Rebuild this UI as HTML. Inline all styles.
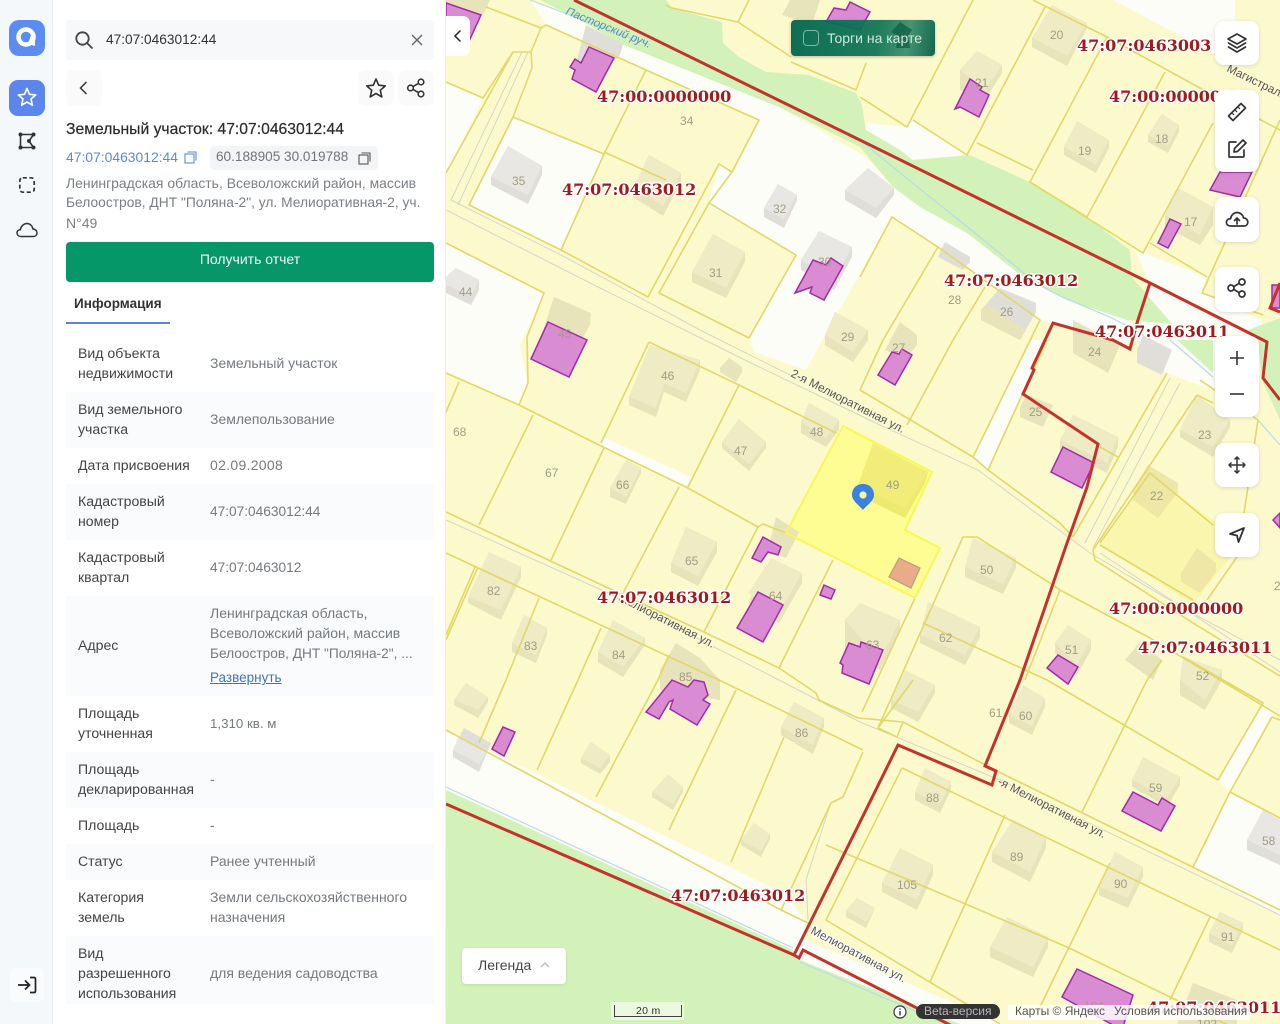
<!DOCTYPE html>
<html lang="ru"><head><meta charset="utf-8"><title>Земельный участок</title>
<style>
*{box-sizing:border-box}
html,body{margin:0;padding:0;width:1280px;height:1024px;overflow:hidden;background:#fff;font-family:"Liberation Sans","Noto Sans CJK SC",sans-serif;color:#333}
.abs{position:absolute}
#side{left:0;top:0;width:53px;height:1024px;background:#f4f8fb;border-right:1px solid #eaeef1}
#panel{left:53px;top:0;width:393px;height:1024px;background:#fff;border-right:1px solid #eee}
.t{position:absolute;white-space:nowrap;font-size:14px;line-height:20px}
.row{position:absolute;left:66px;width:368px}
.alt{background:#fafbfc}
.lab{position:absolute;left:78px;color:#444;font-size:14.1px;line-height:20px;white-space:nowrap;margin-top:-1px}
.val{position:absolute;left:210px;color:#757a7e;font-size:14px;line-height:20px;white-space:nowrap;margin-top:-1px}
.val.s{margin-top:0}
#map{position:absolute;left:446px;top:0;width:834px;height:1024px;overflow:hidden}
.ic{position:absolute;display:block}
.fb{position:absolute;left:1215px;width:44px;background:#fff;border-radius:9px;box-shadow:0 1px 4px rgba(0,0,0,.14)}
.ml{font-family:"DejaVu Serif",serif;font-weight:bold;font-size:16px;fill:#a11a1c;stroke:#fff;stroke-width:3px;paint-order:stroke;stroke-linejoin:round}
.n{font-family:"Liberation Sans",sans-serif;font-size:12px;fill:#a19d84}
.st{font-family:"Liberation Sans",sans-serif;font-size:11.8px;fill:#55554f;stroke:#fdf9d4;stroke-width:2px;paint-order:stroke}
.by{fill:#e7e3ba}.ty{fill:#efebc5}.bw{fill:#dfded8}.tw{fill:#e8e7e3}
.pu{fill:#da8cd2;stroke:#a32aa6;stroke-width:1.5}
.ln{fill:none;stroke:#e2d768;stroke-width:1.6;stroke-linejoin:round}
.gl{fill:none;stroke:#d6d5c4;stroke-width:1}
.rd{fill:none;stroke:#c4332b;stroke-width:3;stroke-linejoin:miter}
</style></head><body>

<div id="map">
<svg width="834" height="1024" viewBox="446 0 834 1024" xmlns="http://www.w3.org/2000/svg" style="position:absolute;left:0;top:0">
<rect x="446" y="0" width="834" height="1024" fill="#fcfacd"/>
<!-- white ground -->
<g fill="#fcfdf6">
<polygon points="530,0 580,20 619,43 779,107 866,157 893,187 920,207 967,233 1027,280 1067,300 1127,320 1150,338 1120,345 1053,323 1040,320 938,247 892,217 828,330 806,370 754,352 749,338 796,255 708,205 719,164 732,172 759,120 546,25"/>
<polygon points="513,118 604,154 561,250 469,205"/>
<polygon points="446,243 544,293 520,345 528,385 519,405 446,372"/>
<polygon points="446,82 483,98 446,175"/>
<polygon points="603,437 691,477 686,487 599,445"/>
<polygon points="1032,340 1047,340 988,470 973,457"/>
<polygon points="1135,250 1207,277 1202,293 1262,320 1262,345 1258,400 1213,390 1167,373 1137,345 1150,283"/>
<polygon points="1263,705 1272,713 1230,792 1218,780"/>
<polygon points="1230,793 1280,820 1280,915 1193,867"/>
<polygon points="446,730 783,893 808,923 806,940 1003,1024 960,1024 800,960 795,957 446,795"/>
<polygon points="1113,0 1235,0 1235,65"/>
<polygon points="860,122 907,127 913,120 967,155 913,160 866,130"/>
</g>
<!-- parcel 22 tint -->
<polygon points="1150,473 1213,520 1240,545 1193,605 1100,545" fill="#fbf6ae"/>
<!-- green -->
<g fill="#d3f2b9">
<polygon points="540,0 666,0 672,8 722,22 723,43 739,57 766,72 809,75 856,93 862,105 866,130 900,150 913,160 970,155 1030,182 1087,217 1130,250 1132,277 1172,324 1127,320 1067,300 1027,280 967,233 920,207 893,187 860,147 779,107 619,43 580,20"/>
<polygon points="1248,330 1280,318 1280,420 1262,380 1258,340"/>
<polygon points="1177,340 1213,373 1213,340"/>
<polygon points="446,790 793,950 800,960 960,1024 446,1024"/>
</g>
<!-- water -->
<g fill="none" stroke="#b9dbe8" stroke-width="1.2">
<path d="M530,0 L650,45"/><path d="M446,787 L793,948"/><path d="M800,962 L960,1030"/>
<path d="M860,140 C920,190 960,220 1020,270 1060,305 1100,305 1150,340"/>
<path d="M1170,340 L1213,377"/><path d="M1258,420 L1280,445"/>
</g>
<!-- selected parcel -->
<polygon points="843,426 932,472 905,530 940,548 915,598 786,533" fill="#fdfd93"/>
<!-- buildings -->
<g>
<polygon class="bw" points="508,146 542,166 542,175 528,204 491,185 491,177"/><polygon class="tw" points="508,146 542,166 528,195 491,177"/>
<polygon class="bw" points="456,268 479,280 479,290 471,305 446,293 446,277"/><polygon class="tw" points="456,268 479,280 471,296 446,285 446,277"/>
<polygon class="by" points="649,155 681,173 681,182 663,216 633,197 633,188"/><polygon class="ty" points="649,155 681,173 663,206 633,188"/>
<polygon class="bw" points="778,184 797,195 797,200 784,228 764,217 764,208"/><polygon class="tw" points="778,184 797,195 784,219 764,208"/>
<polygon class="by" points="713,234 745,252 745,262 726,298 692,282 692,272"/><polygon class="ty" points="713,234 745,252 726,288 692,272"/>
<polygon class="bw" points="819,231 852,247 852,257 834,290 801,270 801,260"/><polygon class="tw" points="819,231 852,247 834,280 801,260"/>
<polygon class="bw" points="586,25 623,44 620,55 595,80 577,60"/><polygon class="by" points="554,297 591,313 590,325 570,360 540,340"/>
<polygon class="by" points="835,312 868,330 868,340 853,362 825,345 825,335"/><polygon class="ty" points="835,312 868,330 853,352 825,335"/>
<polygon class="by" points="977,51 1002,65 1002,73 985,100 960,90 960,70"/><polygon class="ty" points="977,51 1002,65 985,90 960,70"/>
<polygon class="by" points="1052,5 1087,23 1087,28 1067,66 1032,47 1032,38"/><polygon class="ty" points="1052,5 1087,23 1067,56 1032,38"/>
<polygon class="by" points="1077,121 1109,140 1109,148 1096,173 1064,155 1064,147"/><polygon class="ty" points="1077,121 1109,140 1096,165 1064,147"/>
<polygon class="by" points="1162,114 1179,125 1179,132 1168,153 1148,142 1148,135"/><polygon class="ty" points="1162,114 1179,125 1168,146 1148,135"/>
<polygon class="by" points="1178,188 1213,207 1213,225 1200,245 1165,227 1165,215"/><polygon class="ty" points="1178,188 1213,207 1200,235 1165,215"/>
<polygon class="bw" points="868,168 894,188 894,195 876,218 845,200 845,190"/><polygon class="tw" points="868,168 894,188 876,208 845,190"/>
<polygon class="bw" points="945,242 970,257 970,262 963,270 938,257 940,252"/>
<polygon class="bw" points="1000,288 1036,303 1036,312 1020,340 981,320 981,310"/><polygon class="by" points="986,304 1026,330 1020,340 981,320 981,310"/>
<polygon class="by" points="900,322 917,335 917,345 905,360 885,350"/>
<polygon class="by" points="1073,320 1120,345 1108,373 1073,353"/>
<polygon class="bw" points="1137,350 1143,335 1172,350 1162,375 1137,363"/>
<polygon class="by" points="1020,407 1027,395 1053,405 1043,427 1020,417"/>
<polygon class="by" points="1073,415 1118,437 1118,447 1107,473 1060,450 1060,440"/><polygon class="ty" points="1073,415 1118,437 1107,463 1060,440"/>
<polygon class="by" points="1197,395 1230,420 1230,427 1213,457 1180,437 1180,430"/><polygon class="ty" points="1197,395 1230,420 1213,447 1180,430"/>
<polygon points="1148,465 1178,483 1178,492 1158,518 1133,500 1133,490" fill="#eee7a6"/>
<polygon points="1197,548 1216,563 1216,572 1200,593 1181,582 1181,573" fill="#eee7a6"/>
<polygon points="873,443 928,472 925,483 905,518 858,495" fill="#eeea6e"/><polygon points="873,443 928,472 905,508 858,485" fill="#f1ed78"/>
<polygon class="by" points="973,538 1016,558 1016,568 1003,594 965,577 965,567"/><polygon class="ty" points="973,538 1016,558 1003,584 965,567"/>
<polygon class="by" points="928,602 980,627 980,637 965,665 920,643 920,635"/><polygon class="ty" points="928,602 980,627 965,655 920,635"/>
<polygon class="by" points="860,603 900,620 900,630 880,670 845,650 845,620"/><polygon class="ty" points="860,603 900,620 880,660 845,620"/>
<polygon class="by" points="1068,625 1091,640 1091,650 1077,675 1055,653 1055,643"/><polygon class="ty" points="1068,625 1091,640 1077,665 1055,643"/>
<polygon class="by" points="1140,642 1162,660 1153,680 1125,660"/>
<polygon class="by" points="1183,657 1222,670 1222,680 1205,710 1180,695 1180,680"/><polygon class="ty" points="1183,657 1222,670 1205,700 1180,680"/>
<polygon class="by" points="905,670 935,685 935,693 918,722 891,708 891,700"/><polygon class="ty" points="905,670 935,685 918,712 891,700"/>
<polygon class="by" points="650,345 700,360 700,370 686,402 664,392 656,417 629,405 629,397"/><polygon class="ty" points="650,345 700,360 686,393 664,383 656,408 629,397"/>
<polygon class="by" points="729,358 742,367 742,372 736,382 720,372 720,368"/>
<polygon class="by" points="739,419 766,442 766,448 749,471 722,448 722,442"/><polygon class="ty" points="739,419 766,442 749,464 722,442"/>
<polygon class="by" points="809,403 839,420 839,430 826,447 801,433 801,422"/><polygon class="ty" points="809,403 839,420 826,438 801,422"/>
<polygon class="by" points="626,460 641,468 641,473 626,504 610,497 610,488"/><polygon class="ty" points="626,460 641,468 626,497 610,488"/>
<polygon class="by" points="686,527 717,542 717,552 698,586 671,572 671,563"/><polygon class="ty" points="686,527 717,542 698,576 671,563"/>
<polygon class="by" points="776,517 799,532 786,558 768,550"/>
<polygon class="by" points="771,558 802,573 802,583 779,623 748,603"/><polygon class="ty" points="771,558 802,573 779,613 748,593"/>
<polygon class="by" points="489,552 521,567 521,577 501,620 468,603 468,597"/><polygon class="ty" points="489,552 521,567 501,610 468,597"/>
<polygon class="by" points="524,615 547,628 547,635 536,663 512,652 512,643"/><polygon class="ty" points="524,615 547,628 536,655 512,643"/>
<polygon class="by" points="613,620 645,638 645,645 623,677 598,662 598,652"/><polygon class="ty" points="613,620 645,638 623,667 598,652"/>
<polygon class="by" points="676,643 700,658 720,680 720,700 660,690 660,670"/>
<polygon class="by" points="466,683 488,697 488,702 478,718 454,705 454,700"/><polygon class="ty" points="466,683 488,697 478,710 454,700"/>
<polygon class="bw" points="464,728 491,743 479,772 453,757 453,750"/><polygon class="tw" points="458,738 487,752 479,764 453,750"/>
<polygon class="by" points="591,742 610,755 610,762 600,774 581,763 581,758"/><polygon class="ty" points="591,742 610,755 600,768 581,758"/>
<polygon class="by" points="668,774 683,787 683,792 673,810 652,797 652,792"/><polygon class="ty" points="668,774 683,787 673,804 652,792"/>
<polygon class="by" points="794,702 824,718 824,727 813,754 781,735 781,727"/><polygon class="ty" points="794,702 824,718 813,745 781,727"/>
<polygon class="by" points="754,823 770,834 770,839 761,857 741,845 741,840"/><polygon class="ty" points="754,823 770,834 761,851 741,840"/>
<polygon class="by" points="857,898 875,908 866,928 846,917 846,910"/><polygon class="ty" points="857,898 875,908 866,922 846,910"/>
<polygon class="by" points="1023,685 1045,698 1045,707 1032,735 1009,723 1009,715"/><polygon class="ty" points="1023,685 1045,698 1032,726 1009,715"/>
<polygon class="by" points="925,768 951,782 951,790 940,813 915,800 915,792"/><polygon class="ty" points="925,768 951,782 940,804 915,792"/>
<polygon class="by" points="1013,820 1046,838 1046,848 1030,882 992,862 992,852"/><polygon class="ty" points="1013,820 1046,838 1030,872 992,852"/>
<polygon class="by" points="900,848 933,865 933,875 917,910 882,892 882,883"/><polygon class="ty" points="900,848 933,865 917,900 882,883"/>
<polygon class="by" points="1115,852 1143,867 1143,877 1128,908 1099,895 1099,887"/><polygon class="ty" points="1115,852 1143,867 1128,898 1099,887"/>
<polygon class="by" points="1007,917 1048,937 1048,947 1033,977 990,957 990,947"/><polygon class="ty" points="1007,917 1048,937 1033,967 990,947"/>
<polygon class="by" points="1220,912 1243,923 1243,930 1232,953 1209,942 1209,933"/><polygon class="ty" points="1220,912 1243,923 1232,945 1209,933"/>
<polygon class="by" points="1143,757 1180,777 1180,785 1167,807 1132,787 1132,780"/><polygon class="ty" points="1143,757 1180,777 1167,798 1132,780"/>
<polygon class="bw" points="1263,810 1280,820 1280,865 1247,850 1247,840"/><polygon class="tw" points="1263,810 1280,820 1280,855 1247,840"/>
<polygon class="by" points="1193,983 1237,1000 1237,1024 1177,1024"/>
<polygon class="by" points="782,15 790,0 820,0 812,25"/><polygon class="by" points="446,0 490,0 483,15 446,10"/>
</g>
<!-- thin grey road lines -->
<g class="gl">
<path d="M522,52 L451,200 L561,255 L700,330 L790,375"/><path d="M528,52 L458,205"/>
<path d="M446,210 L600,288 L749,362 L880,425 L978,470 L1090,553 L1190,612 L1280,660"/>
<path d="M446,520 L606,592 L779,680 L860,722 L1000,780 L1280,915"/>
<path d="M1170,378 L1085,543"/><path d="M1180,383 L1093,548"/>
<path d="M830,805 L806,880 L808,920"/><path d="M1100,553 L1280,672"/>
</g>
<!-- parcel lines -->
<g class="ln">
<path d="M486,7 L541,28 L531,52 L513,52 L446,173"/><path d="M446,82 L483,98 L513,52"/>
<path d="M541,28 L546,25 L646,70 L759,120 L732,172 L719,164 L648,297 L561,250 L469,205 L513,117 L604,154 L561,250"/>
<path d="M531,52 L532,68 L513,117"/><path d="M646,70 L604,154"/><path d="M604,152 L666,180"/>
<path d="M732,172 L709,203 L796,255 L749,338 L659,293 L709,203"/>
<path d="M446,243 L544,293 L527,337 L528,383 L519,405"/>
<path d="M749,0 L738,22 L791,57"/><path d="M666,5 L672,8 L738,22"/><path d="M791,62 L856,90 L866,63"/>
<path d="M860,97 L907,127 L973,0"/><path d="M913,120 L967,155 L1045,7"/><path d="M977,143 L1033,170"/>
<path d="M1033,0 L1107,37 L1030,182 L1087,217 L1165,72"/><path d="M1107,37 L1200,88 L1280,130"/>
<path d="M1030,182 L1143,253 L1213,123"/><path d="M1150,243 L1207,277"/><path d="M1226,240 L1202,293 L1263,315"/><path d="M1226,240 L1280,120"/>
<path d="M860,277 L892,217 L938,247 L1040,320 L973,457"/>
<path d="M938,247 L883,340 L860,390"/><path d="M985,287 L953,340 L907,425"/>
<path d="M446,373 L519,405 L599,445 L686,487 L758,527 L763,524 L786,533"/>
<path d="M758,527 L704,632"/><path d="M459,382 L446,412"/><path d="M533,415 L479,525"/><path d="M604,448 L551,560"/><path d="M679,487 L621,597"/>
<path d="M649,342 L601,443"/><path d="M649,342 L739,385 L836,433"/><path d="M739,385 L688,487"/>
<path d="M860,390 L973,457 L988,470 L1060,523 L1073,537 L1167,373"/><path d="M988,470 L1047,340"/><path d="M1100,447 L1118,457"/>
<path d="M1197,395 L1213,403"/><path d="M1197,395 L1093,550 L1095,560 L1193,623 L1280,676"/>
<path d="M1100,543 L1150,473 L1213,525"/><path d="M1100,545 L1193,600"/><path d="M1237,557 L1207,600"/><path d="M1258,420 L1240,540 L1237,557"/><path d="M1200,380 L1258,420"/>
<path d="M963,537 L977,537 L1053,585 L1060,590 L1150,638 L1280,716"/><path d="M963,537 L878,728"/>
<path d="M915,598 L862,712"/><path d="M923,623 L1047,680 L1218,780"/><path d="M1060,590 L1025,680"/>
<path d="M1183,657 L1223,680 L1263,703"/><path d="M1162,660 L1147,680"/>
<path d="M446,512 L606,587 L704,632 L779,668 L816,693 L819,700 L858,718 L903,722 L995,770 L1280,910"/>
<path d="M446,553 L719,680 L863,750"/><path d="M478,567 L446,640"/><path d="M475,567 L446,635"/>
<path d="M539,598 L506,680 L479,743"/><path d="M601,628 L578,680 L537,770"/><path d="M669,655 L658,680 L596,797"/>
<path d="M833,560 L779,668"/><path d="M736,690 L669,830"/><path d="M784,737 L731,862"/>
<path d="M446,730 L781,910 L808,923"/><path d="M781,910 L831,803 L843,797 L863,752"/>
<path d="M903,722 L897,737 L878,728 L913,680"/><path d="M902,768 L826,920 L1000,1024"/>
<path d="M902,768 L1280,950"/><path d="M826,845 L1067,947 L1170,997 L1280,1050"/>
<path d="M1005,815 L930,982"/><path d="M1110,863 L1037,1013"/><path d="M1210,917 L1170,1000"/>
<path d="M1147,680 L1082,812"/><path d="M1223,680 L1263,703 L1218,780"/>
<path d="M1230,792 L1193,867"/><path d="M1272,717 L1230,792"/><path d="M1230,792 L1280,818"/><path d="M1272,717 L1280,720"/>
</g>
<polygon points="843,426 932,472 905,530 940,548 915,598 786,533" fill="none" stroke="#f7f757" stroke-width="2"/>
<!-- pale structure -->
<polygon points="899,558 920,568 911,588 889,577" fill="#e8ad88" stroke="#bd9a7c" stroke-width="1.2"/>
<!-- purple buildings -->
<g class="pu">
<polygon points="446,3 481,15 465,50 446,42"/>
<polygon points="589,47 614,58 596,92 572,79 575,70 570,67 575,59 581,63"/>
<polygon points="813,260 826,265 831,258 843,266 824,300 810,293 812,287 795,293"/>
<polygon points="548,322 587,340 569,377 531,359"/>
<polygon points="970,79 982,87 980,90 989,95 979,117 960,107 955,109"/>
<polygon points="1220,172 1252,172 1240,197 1210,190"/>
<polygon points="1170,219 1181,224 1168,248 1158,243"/>
<polygon points="892,352 899,354 902,349 912,355 895,385 878,375"/>
<polygon points="1063,447 1094,463 1082,488 1051,472"/>
<polygon points="1058,655 1078,667 1068,684 1047,668"/>
<polygon points="763,537 781,547 778,555 768,552 761,562 752,558"/>
<polygon points="824,585 835,590 831,599 820,595"/>
<polygon points="758,592 783,605 763,642 737,628"/>
<polygon points="849,643 860,647 861,642 883,650 869,684 842,673 843,665 840,663"/>
<polygon points="672,680 688,687 694,680 704,682 708,695 703,700 710,704 697,725 670,709 673,700 669,702 659,719 646,712"/>
<polygon points="503,727 515,732 504,756 492,749"/>
<polygon points="1133,792 1158,805 1162,798 1175,806 1161,831 1153,827 1122,811"/>
<polygon points="1077,969 1133,995 1122,1030 1062,997"/>
<polygon points="1280,513 1273,520 1280,528"/>
<polygon points="826,22 834,8 846,10 850,2 870,12 860,30"/>
<polygon points="1272,285 1280,285 1280,308 1272,308"/>
</g>
<!-- red quarter borders -->
<g class="rd">
<path d="M574,0 L866,143 L1150,283 L1267,342 L1263,378 L1280,400"/>
<path d="M1150,283 L1137,323 L1130,349 L1113,340 L1053,323 L1032,368 L1034,370 L1023,394 L1098,444 L1087,487 L1067,543 L1020,680 L985,766 L996,771 L992,785 L898,745 L860,822 L794,955"/>
<path d="M446,804 L794,955 L799,958 L803,950 L960,1030"/>
<path d="M1280,283 L1270,308 L1280,312"/>
</g>
<!-- house numbers -->
<g class="n">
<text x="680" y="125">34</text><text x="512" y="185">35</text><text x="773" y="213">32</text><text x="709" y="277">31</text><text x="818" y="266">30</text><text x="459" y="296">44</text>
<text x="1050" y="39">20</text><text x="1078" y="155">19</text><text x="1155" y="143">18</text><text x="1184" y="226">17</text><text x="975" y="87">21</text>
<text x="948" y="304">28</text><text x="1000" y="316">26</text><text x="841" y="341">29</text><text x="892" y="352">27</text><text x="1088" y="356">24</text><text x="1029" y="416">25</text><text x="1198" y="439">23</text><text x="1150" y="500">22</text>
<text x="558" y="338">45</text><text x="661" y="380">46</text><text x="734" y="455">47</text><text x="810" y="436">48</text><text x="886" y="489">49</text><text x="980" y="574">50</text><text x="939" y="642">62</text><text x="866" y="649">63</text><text x="1065" y="654">51</text><text x="1196" y="680">52</text>
<text x="453" y="436">68</text><text x="545" y="477">67</text><text x="616" y="489">66</text><text x="685" y="565">65</text><text x="769" y="600">64</text><text x="487" y="595">82</text><text x="524" y="650">83</text><text x="612" y="659">84</text><text x="679" y="681">85</text><text x="795" y="737">86</text>
<text x="989" y="717">61</text><text x="1019" y="720">60</text><text x="1149" y="792">59</text><text x="1262" y="845">58</text><text x="926" y="802">88</text><text x="1010" y="861">89</text><text x="897" y="889">105</text><text x="1114" y="888">90</text><text x="1221" y="941">91</text><text x="1084" y="1010">104</text><text x="1197" y="1028">102</text><text x="1274" y="590">2</text>
</g>
<!-- streets -->
<text class="st" transform="translate(790,376) rotate(27)">2-я Мелиоративная ул.</text>
<text class="st" transform="translate(618,600) rotate(27)">Мелиоративная ул.</text>
<text class="st" transform="translate(997,784) rotate(27)">-я Мелиоративная ул.</text>
<text class="st" transform="translate(810,933) rotate(28)" style="stroke:#fff">Мелиоративная ул.</text>
<text transform="translate(565,14) rotate(22)" style="font:italic 11.5px 'Liberation Sans',sans-serif;fill:#5b8bb8">Пасторский руч.</text>
<text class="st" transform="translate(1226,71) rotate(26)">Магистральная</text>
<!-- cadastral labels -->
<g class="ml">
<text x="1077" y="51">47:07:0463003</text>
<text x="597" y="102">47:00:0000000</text>
<text x="1109" y="102">47:00:0000000</text>
<text x="562" y="195">47:07:0463012</text>
<text x="944" y="286">47:07:0463012</text>
<text x="1095" y="337">47:07:0463011</text>
<text x="597" y="603">47:07:0463012</text>
<text x="1109" y="614">47:00:0000000</text>
<text x="1138" y="653">47:07:0463011</text>
<text x="671" y="901">47:07:0463012</text>
<text x="1147" y="1013">47:07:0463011</text>
</g>
<!-- selected pin -->
<path d="M863,484 C856,484 852,489 852,495 C852,501 859,505 863,510 C867,505 874,501 874,495 C874,489 870,484 863,484 Z" fill="#3b82e0"/>
<circle cx="863" cy="495" r="3.6" fill="#fdfd93"/>
</svg>
</div>

<!-- map overlay controls -->
<div class="abs" style="left:446px;top:16px;width:24px;height:40px;background:#fff;border-radius:0 7px 7px 0"></div>
<svg class="ic" style="left:451px;top:29px" width="14" height="14" viewBox="0 0 14 14"><path d="M9.5,1.5 L4,7 L9.5,12.5" fill="none" stroke="#222" stroke-width="1.5"/></svg>

<div class="abs" style="left:791px;top:20px;width:144px;height:36px;border-radius:4px;background:linear-gradient(100deg,rgba(6,105,80,.97),rgba(14,115,85,.93) 60%,rgba(30,125,95,.82) 80%,rgba(6,95,70,.95));box-shadow:0 1px 3px rgba(0,0,0,.25)"></div>
<svg class="ic" style="left:888px;top:22px" width="34" height="26" viewBox="0 0 34 26"><path d="M12,0 L24,8 L20,14 L22,26 L8,26 L10,14 L3,10 Z" fill="#0a5b43" opacity=".7"/></svg>
<div class="abs" style="left:803px;top:30px;width:16px;height:16px;border:1px solid #7fb8a4;border-radius:4px"></div>
<div class="t" style="left:827px;top:28px;color:#cfe8de">Торги на карте</div>

<div class="fb" style="top:21px;height:44px"></div>
<svg class="ic" style="left:1225px;top:31px" width="24" height="24" viewBox="0 0 24 24" fill="none" stroke="#333" stroke-width="1.7" stroke-linejoin="round" stroke-linecap="round"><path d="M12,3 L21,8 L12,13 L3,8 Z"/><path d="M3.5,12 L12,17 L20.5,12"/><path d="M3.5,16 L12,21 L20.5,16"/></svg>
<div class="fb" style="top:90px;height:82px"></div>
<svg class="ic" style="left:1225px;top:100px" width="24" height="24" viewBox="0 0 24 24" fill="none" stroke="#333" stroke-width="1.7" stroke-linejoin="round"><path d="M16,3.5 L20.5,8 L8,20.5 L3.5,16 Z"/><path d="M13,7 L15,9 M10,10 L12,12 M7,13 L9,15" stroke-width="1.2"/></svg>
<svg class="ic" style="left:1225px;top:137px" width="24" height="24" viewBox="0 0 24 24" fill="none" stroke="#333" stroke-width="1.7" stroke-linejoin="round" stroke-linecap="round"><path d="M11,5 L5,5 Q4,5 4,6 L4,20 L18,20 Q19,20 19,19 L19,13"/><path d="M18,3 L21,6 L12.5,14.5 L9,15 L9.5,11.5 Z"/></svg>
<div class="fb" style="top:197px;height:45px"></div>
<svg class="ic" style="left:1225px;top:207px" width="24" height="24" viewBox="0 0 24 24" fill="none" stroke="#333" stroke-width="1.7" stroke-linejoin="round" stroke-linecap="round"><path d="M6,19 L5.5,19 C2,19 1,16 1.5,14.5 C2,12.5 4,11.5 5.5,11.8 C6,8 9,5.5 12,5.5 C15.5,5.5 18,8 18.5,11 C21,11 23,13 22.8,15.5 C22.5,18 20.5,19 19,19 Z"/><path d="M12,17 L12,11.5 M9.5,13.5 L12,11 L14.5,13.5"/></svg>
<div class="fb" style="top:267px;height:45px"></div>
<svg class="ic" style="left:1226px;top:277px" width="22" height="22" viewBox="0 0 22 22" fill="none" stroke="#333" stroke-width="1.7"><circle cx="5" cy="11" r="3"/><circle cx="16" cy="5" r="3"/><circle cx="16" cy="17" r="3"/><path d="M7.7,9.6 L13.3,6.4 M7.7,12.4 L13.3,15.6"/></svg>
<div class="fb" style="top:336px;height:81px"></div>
<svg class="ic" style="left:1229px;top:350px" width="16" height="16" viewBox="0 0 16 16"><path d="M8,1 L8,15 M1,8 L15,8" stroke="#333" stroke-width="1.6"/></svg>
<svg class="ic" style="left:1229px;top:386px" width="16" height="16" viewBox="0 0 16 16"><path d="M1,8 L15,8" stroke="#333" stroke-width="1.6"/></svg>
<div class="fb" style="top:443px;height:44px"></div>
<svg class="ic" style="left:1228px;top:456px" width="18" height="18" viewBox="0 0 18 18" fill="none" stroke="#333" stroke-width="1.5" stroke-linejoin="round"><path d="M9,1 L9,17 M1,9 L17,9"/><path d="M6.5,3.5 L9,1 L11.5,3.5 M6.5,14.5 L9,17 L11.5,14.5 M3.5,6.5 L1,9 L3.5,11.5 M14.5,6.5 L17,9 L14.5,11.5"/></svg>
<div class="fb" style="top:513px;height:44px"></div>
<svg class="ic" style="left:1228px;top:526px" width="18" height="18" viewBox="0 0 18 18" fill="none" stroke="#333" stroke-width="1.8" stroke-linejoin="round"><path d="M16,2 L2,8 L9,9.5 L10.5,16 Z"/></svg>

<div class="abs" style="left:462px;top:948px;width:104px;height:36px;background:#fff;border-radius:4px;box-shadow:0 1px 3px rgba(0,0,0,.1)"></div>
<div class="t" style="left:478px;top:955px;color:#444">Легенда</div>
<svg class="ic" style="left:540px;top:961px" width="10" height="8" viewBox="0 0 10 8"><path d="M1,6 L5,2 L9,6" fill="none" stroke="#c4c4c4" stroke-width="1.6"/></svg>

<div class="abs" style="left:611px;top:1002px;width:73px;height:18px;background:rgba(255,255,255,.55)"></div>
<div class="abs" style="left:614px;top:1005px;width:68px;height:12px;border:1px solid #444;border-top:none"></div>
<div class="t" style="left:636px;top:1001px;font-size:10.5px;color:#333;letter-spacing:.3px">20 m</div>

<svg class="ic" style="left:892px;top:1004px" width="16" height="16" viewBox="0 0 16 16"><circle cx="8" cy="8" r="6" fill="#fff" stroke="#333" stroke-width="1.2"/><path d="M8,7 L8,11.5 M8,4.5 L8,5.8" stroke="#333" stroke-width="1.4"/></svg>
<div class="abs" style="left:916px;top:1004px;width:84px;height:15px;background:#333;border-radius:8px"></div>
<div class="t" style="left:924px;top:1001px;font-size:12px;color:#b6b6b6">Beta-версия</div>
<div class="abs" style="left:1008px;top:1005px;width:242px;height:15px;background:rgba(255,255,255,.82)"></div>
<div class="t" style="left:1015px;top:1001px;font-size:12px;color:#555">Карты © Яндекс</div>
<div class="t" style="left:1114px;top:1001px;font-size:12px;color:#555">Условия использования</div>

<!-- sidebar -->
<div id="side" class="abs"></div>
<div class="abs" style="left:9px;top:20px;width:36px;height:36px;background:#5a8cf2;border-radius:10px"></div>
<svg class="ic" style="left:9px;top:20px" width="36" height="36" viewBox="0 0 36 36"><circle cx="17" cy="17" r="7.5" fill="none" stroke="#fff" stroke-width="4.5"/><path d="M22,15 L26,15 L26,26 L19,24 Z" fill="#fff"/></svg>
<div class="abs" style="left:9px;top:80px;width:36px;height:36px;background:#5b86ec;border-radius:9px"></div>
<svg class="ic" style="left:17px;top:87px" width="20" height="20" viewBox="0 0 20 20"><path d="M10,1.5 L12.5,7.3 L18.7,7.9 L14,12 L15.4,18.2 L10,15 L4.6,18.2 L6,12 L1.3,7.9 L7.5,7.3 Z" fill="none" stroke="#fff" stroke-width="1.6" stroke-linejoin="round"/></svg>
<svg class="ic" style="left:18px;top:132px" width="18" height="18" viewBox="0 0 18 18" fill="none" stroke="#333" stroke-width="1.6"><path d="M2.5,2.5 L15.5,2.5 L11,9 L15.5,15.5 L2.5,15.5 Z"/><circle cx="2.5" cy="2.5" r="1.2" fill="#333"/><circle cx="15.5" cy="2.5" r="1.2" fill="#333"/><circle cx="11" cy="9" r="1.2" fill="#333"/><circle cx="15.5" cy="15.5" r="1.2" fill="#333"/><circle cx="2.5" cy="15.5" r="1.2" fill="#333"/></svg>
<svg class="ic" style="left:18px;top:176px" width="18" height="18" viewBox="0 0 18 18"><rect x="1.8" y="1.8" width="14.4" height="14.4" rx="3" fill="none" stroke="#333" stroke-width="1.7" stroke-dasharray="4 2.6"/></svg>
<svg class="ic" style="left:16px;top:221px" width="22" height="18" viewBox="0 0 22 18"><path d="M5,15.5 C2.5,15.5 1,14 1,12 C1,10 2.5,8.7 4.3,8.7 C5,5 8,2.5 11,2.5 C14,2.5 16.5,5 17,8 C19.3,8 21,9.8 21,12 C21,14 19.5,15.5 17.5,15.5 Z" fill="none" stroke="#333" stroke-width="1.5"/></svg>
<div class="abs" style="left:10px;top:968px;width:34px;height:34px;background:#f9fbfc;border-radius:6px"></div>
<svg class="ic" style="left:17px;top:976px" width="20" height="18" viewBox="0 0 20 18" fill="none" stroke="#222" stroke-width="1.7"><path d="M1,9 L12,9 M8,4.5 L12.5,9 L8,13.5"/><path d="M13,1.5 L17,1.5 Q18.5,1.5 18.5,3 L18.5,15 Q18.5,16.5 17,16.5 L13,16.5"/></svg>

<!-- panel -->
<div id="panel" class="abs"></div>
<div class="abs" style="left:66px;top:20px;width:368px;height:40px;background:#f6f8fa;border-radius:4px"></div>
<svg class="ic" style="left:74px;top:30px" width="20" height="20" viewBox="0 0 20 20" fill="none" stroke="#444" stroke-width="1.8"><circle cx="8.5" cy="8.5" r="6.2"/><path d="M13,13 L18.5,18.5"/></svg>
<div class="t" style="left:106px;top:30px;font-size:13.7px;color:#333">47:07:0463012:44</div>
<svg class="ic" style="left:411px;top:34px" width="12" height="12" viewBox="0 0 12 12"><path d="M1,1 L11,11 M11,1 L1,11" stroke="#666" stroke-width="1.4"/></svg>

<div class="abs" style="left:66px;top:70px;width:36px;height:36px;background:#fafafa;border-radius:7px"></div>
<svg class="ic" style="left:77px;top:81px" width="14" height="14" viewBox="0 0 14 14"><path d="M9.5,1 L3.5,7 L9.5,13" fill="none" stroke="#333" stroke-width="1.5"/></svg>
<div class="abs" style="left:358px;top:70px;width:36px;height:36px;background:#fafafa;border-radius:7px"></div>
<svg class="ic" style="left:365px;top:77px" width="22" height="22" viewBox="0 0 22 22"><path d="M11,2 L13.7,8.2 L20.3,8.9 L15.3,13.3 L16.8,19.9 L11,16.5 L5.2,19.9 L6.7,13.3 L1.7,8.9 L8.3,8.2 Z" fill="none" stroke="#333" stroke-width="1.6" stroke-linejoin="round"/></svg>
<div class="abs" style="left:398px;top:70px;width:36px;height:36px;background:#fafafa;border-radius:7px"></div>
<svg class="ic" style="left:406px;top:78px" width="20" height="20" viewBox="0 0 20 20" fill="none" stroke="#333" stroke-width="1.6"><circle cx="4.5" cy="10" r="2.8"/><circle cx="15" cy="4" r="2.8"/><circle cx="15" cy="16" r="2.8"/><path d="M7,8.6 L12.5,5.4 M7,11.4 L12.5,14.6"/></svg>

<div class="t" style="left:66px;top:120px;font-size:15.7px;color:#2b2b2b;-webkit-text-stroke:.2px #2b2b2b">Земельный участок: 47:07:0463012:44</div>
<div class="t" style="left:66px;top:147px;font-size:13.9px;color:#5b8bd8">47:07:0463012:44</div>
<svg class="ic" style="left:184px;top:151px" width="13" height="13" viewBox="0 0 13 13" fill="none" stroke="#5b8bd8" stroke-width="1.1"><rect x="1" y="3" width="9" height="9"/><path d="M3.5,1 L12,1 L12,9.5"/></svg>
<div class="abs" style="left:210px;top:146px;width:168px;height:24px;background:#f2f4f6;border-radius:4px"></div>
<div class="t" style="left:216px;top:147px;font-size:13.6px;color:#70757a">60.188905 30.019788</div>
<svg class="ic" style="left:358px;top:152px" width="13" height="13" viewBox="0 0 13 13" fill="none" stroke="#555" stroke-width="1.1"><rect x="1" y="3" width="9" height="9"/><path d="M3.5,1 L12,1 L12,9.5"/></svg>

<div class="t" style="left:66px;top:173px;color:#7a7f83;font-size:13.95px">Ленинградская область, Всеволожский район, массив</div>
<div class="t" style="left:66px;top:193px;color:#7a7f83;font-size:13.8px">Белоостров, ДНТ "Поляна-2", ул. Мелиоративная-2, уч.</div>
<div class="t" style="left:66px;top:213px;color:#7a7f83">N°49</div>

<div class="abs" style="left:66px;top:242px;width:368px;height:40px;background:#069768;border-radius:4px;box-shadow:0 0 1px rgba(0,0,0,.2)"></div>
<div class="t" style="left:66px;width:368px;top:249px;text-align:center;color:#f2fbf7">Получить отчет</div>

<div class="t" style="left:74px;top:294px;font-size:13.5px;font-weight:bold;color:#333">Информация</div>
<div class="abs" style="left:66px;top:322px;width:104px;height:2px;background:#5b86d8"></div>

<!-- table -->
<div class="row alt" style="top:392px;height:56px"></div>
<div class="row alt" style="top:484px;height:56px"></div>
<div class="row alt" style="top:596px;height:100px"></div>
<div class="row alt" style="top:752px;height:56px"></div>
<div class="row alt" style="top:844px;height:36px"></div>
<div class="row alt" style="top:936px;height:68px"></div>

<div class="lab" style="top:344px">Вид объекта<br>недвижимости</div><div class="val" style="top:354px">Земельный участок</div>
<div class="lab" style="top:400px">Вид земельного<br>участка</div><div class="val" style="top:410px">Землепользование</div>
<div class="lab" style="top:456px">Дата присвоения</div><div class="val" style="top:456px;letter-spacing:.3px">02.09.2008</div>
<div class="lab" style="top:492px">Кадастровый<br>номер</div><div class="val s" style="top:502px;font-size:13.7px">47:07:0463012:44</div>
<div class="lab" style="top:548px">Кадастровый<br>квартал</div><div class="val s" style="top:558px;font-size:13.7px">47:07:0463012</div>
<div class="lab" style="top:636px">Адрес</div>
<div class="val" style="top:604px">Ленинградская область,<br>Всеволожский район, массив<br><span style="font-size:13.7px">Белоостров, ДНТ "Поляна-2", ...</span></div>
<div class="val s" style="top:668px;color:#3f74b5;text-decoration:underline;font-size:13.5px">Развернуть</div>
<div class="lab" style="top:704px">Площадь<br>уточненная</div><div class="val s" style="top:714px;font-size:13.3px">1,310 кв. м</div>
<div class="lab" style="top:760px">Площадь<br>декларированная</div><div class="val" style="top:770px">-</div>
<div class="lab" style="top:816px">Площадь</div><div class="val" style="top:816px">-</div>
<div class="lab" style="top:852px">Статус</div><div class="val" style="top:852px">Ранее учтенный</div>
<div class="lab" style="top:888px">Категория<br>земель</div><div class="val" style="top:888px">Земли сельскохозяйственного<br>назначения</div>
<div class="lab" style="top:944px">Вид<br>разрешенного<br>использования</div><div class="val" style="top:964px">для ведения садоводства</div>
</body></html>
